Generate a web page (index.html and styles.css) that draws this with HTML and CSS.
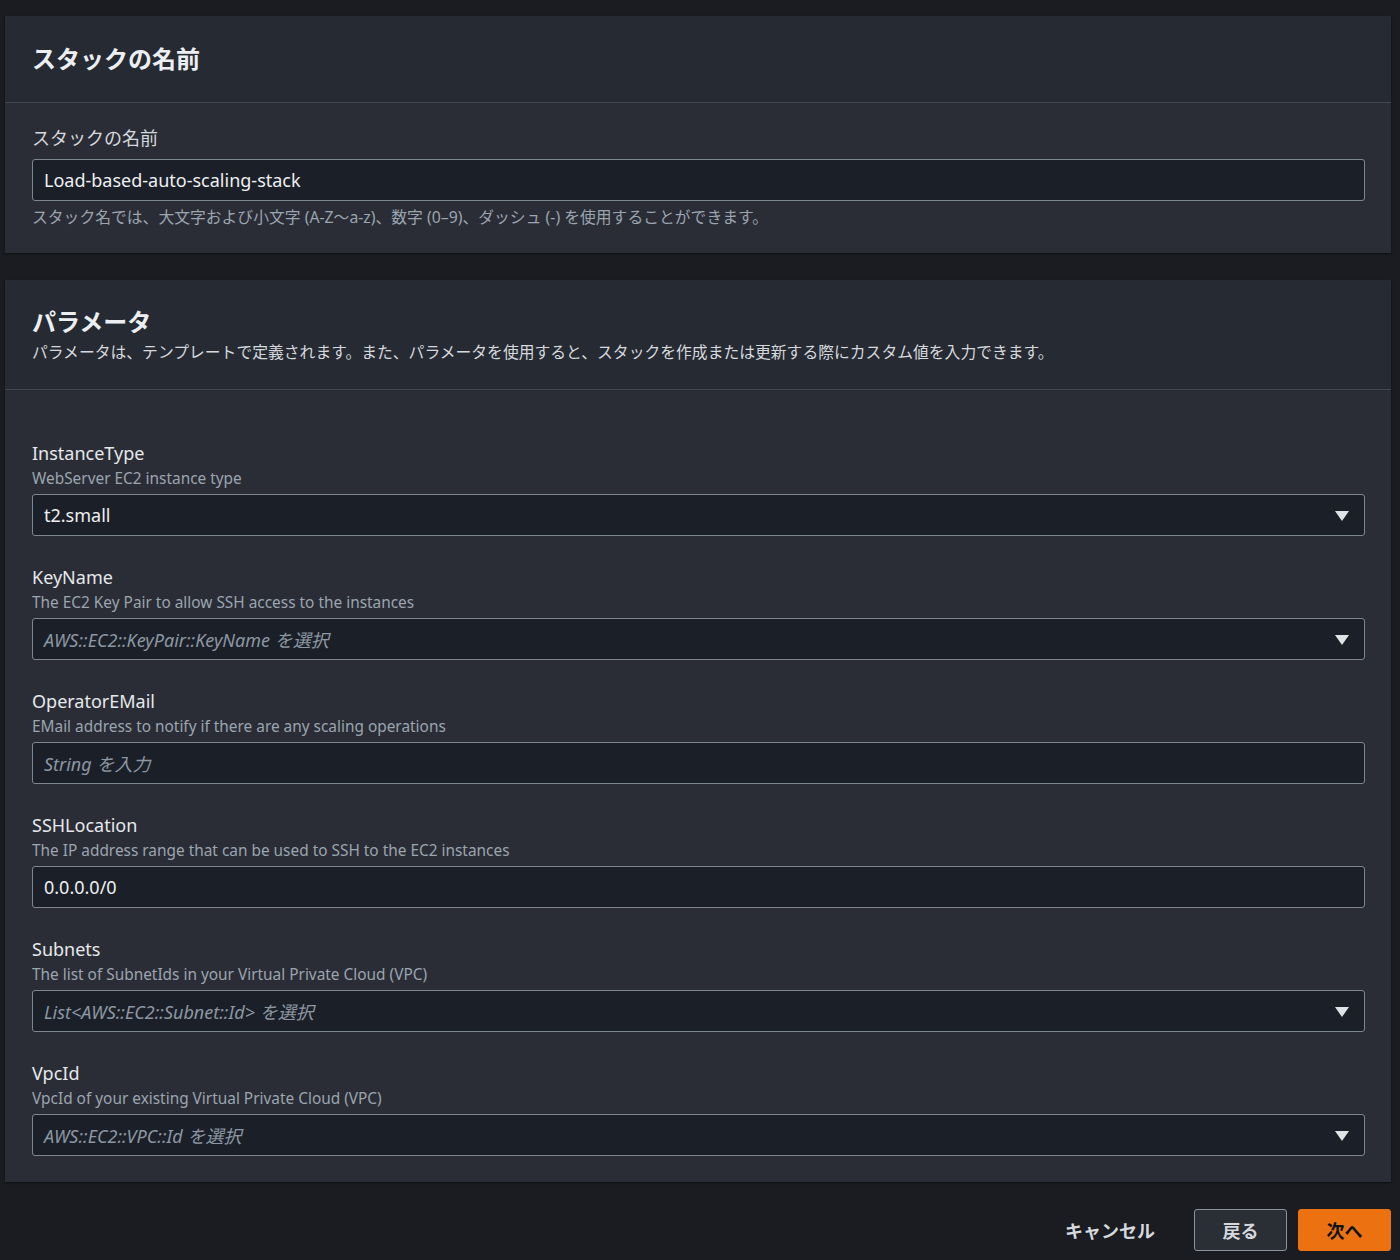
FILE: index.html
```html
<!DOCTYPE html>
<html lang="ja">
<head>
  <meta charset="UTF-8" />
  <title>スタックの詳細を指定</title>
  <link rel="stylesheet" href="styles.css">
</head>
<body>
  <div class="page">
    <section class="card">
      <div class="card-header">
        <h2>スタックの名前</h2>
      </div>
      <div class="card-body card-body-name">
        <label class="field-label" for="stack-name">スタックの名前</label>
        <div class="input">Load-based-auto-scaling-stack</div>
        <p class="hint">スタック名では、大文字および小文字 (A-Z～a-z)、数字 (0–9)、ダッシュ (-) を使用することができます。</p>
      </div>
    </section>

    <section class="card">
      <div class="card-header card-header-params">
        <h2>パラメータ</h2>
        <p class="card-desc">パラメータは、テンプレートで定義されます。また、パラメータを使用すると、スタックを作成または更新する際にカスタム値を入力できます。</p>
      </div>
      <div class="card-body card-body-params">
        <div class="field">
          <div class="field-name">InstanceType</div>
          <div class="field-desc">WebServer EC2 instance type</div>
          <div class="input select">t2.small<span class="caret"></span></div>
        </div>
        <div class="field">
          <div class="field-name">KeyName</div>
          <div class="field-desc">The EC2 Key Pair to allow SSH access to the instances</div>
          <div class="input select placeholder">AWS::EC2::KeyPair::KeyName を選択<span class="caret"></span></div>
        </div>
        <div class="field">
          <div class="field-name">OperatorEMail</div>
          <div class="field-desc">EMail address to notify if there are any scaling operations</div>
          <div class="input placeholder">String を入力</div>
        </div>
        <div class="field">
          <div class="field-name">SSHLocation</div>
          <div class="field-desc">The IP address range that can be used to SSH to the EC2 instances</div>
          <div class="input">0.0.0.0/0</div>
        </div>
        <div class="field">
          <div class="field-name">Subnets</div>
          <div class="field-desc">The list of SubnetIds in your Virtual Private Cloud (VPC)</div>
          <div class="input select placeholder">List&lt;AWS::EC2::Subnet::Id&gt; を選択<span class="caret"></span></div>
        </div>
        <div class="field">
          <div class="field-name">VpcId</div>
          <div class="field-desc">VpcId of your existing Virtual Private Cloud (VPC)</div>
          <div class="input select placeholder">AWS::EC2::VPC::Id を選択<span class="caret"></span></div>
        </div>
      </div>
    </section>

    <div class="actions">
      <button class="btn-link" type="button">キャンセル</button>
      <button class="btn-normal" type="button">戻る</button>
      <button class="btn-primary" type="button">次へ</button>
    </div>
  </div>
</body>
</html>
```

FILE: styles.css
```css
body {
  margin: 0;
  background: #1a1c21;
  color: #d1d5db;
  font-family: "Noto Sans", "Noto Sans CJK JP", sans-serif;
  min-height: 100vh;
}

.page {
  padding: 16px 9px 0 5px;
}

.card {
  background: #2a2d35;
  box-shadow: 0 1px 2px rgba(0, 0, 0, 0.5);
  margin-bottom: 27px;
}

.card-header {
  background: #262a32;
  border-bottom: 1px solid #414750;
  height: 87px;
  padding: 0 27px;
  box-sizing: border-box;
  display: flex;
  flex-direction: column;
  justify-content: center;
}

.card-header h2 {
  margin: 0;
  font-size: 24px;
  line-height: 30px;
  font-weight: 700;
  color: #eceff1;
}

.card-header-params {
  height: 110px;
  justify-content: flex-start;
  padding-top: 27px;
}

.card-desc {
  margin: 4px 0 0;
  font-size: 15.8px;
  line-height: 22px;
  color: #d5d9de;
}

.card-body {
  padding: 0 26px 0 27px;
}

.card-body-name {
  padding-top: 22px;
  padding-bottom: 25px;
}

.field-label {
  display: block;
  font-size: 18px;
  line-height: 26px;
  color: #d5d9de;
  margin-bottom: 8px;
}

.input {
  position: relative;
  height: 42px;
  box-sizing: border-box;
  border: 1px solid #7d8791;
  border-radius: 3px;
  background: #1b1f27;
  padding: 0 40px 0 11px;
  display: flex;
  align-items: center;
  font-size: 18px;
  color: #eef0f2;
}

.placeholder {
  font-style: italic;
  color: #8c97a3;
}

.caret {
  position: absolute;
  right: 15px;
  top: 16px;
  width: 0;
  height: 0;
  border-left: 7px solid transparent;
  border-right: 7px solid transparent;
  border-top: 10px solid #dfe3e6;
}

.hint {
  margin: 5px 0 0;
  font-size: 15.8px;
  line-height: 22px;
  color: #9ba5b0;
}

.card-body-params {
  padding-top: 50px;
  padding-bottom: 26px;
}

.field {
  margin-bottom: 28px;
}
.field:last-child {
  margin-bottom: 0;
}

.field-name {
  font-size: 18px;
  line-height: 26px;
  color: #e6e9ec;
  margin-bottom: 2px;
}

.field-desc {
  font-size: 15.4px;
  line-height: 22px;
  color: #9ba5b0;
  margin-bottom: 4px;
}

.actions {
  display: flex;
  justify-content: flex-end;
  align-items: center;
  gap: 11px;
}

.actions button {
  font-family: inherit;
  font-size: 18px;
  font-weight: 700;
  height: 42px;
  border-radius: 3px;
  cursor: pointer;
}

.btn-link {
  background: none;
  border: none;
  color: #d5d9de;
  padding: 0 28px;
}

.btn-normal {
  background: #2a2e35;
  border: 1px solid #8a939c;
  color: #d5d9de;
  width: 93px;
}

.btn-primary {
  background: #ec7211;
  border: 1px solid #ec7211;
  color: #0f141a;
  width: 93px;
}
```
